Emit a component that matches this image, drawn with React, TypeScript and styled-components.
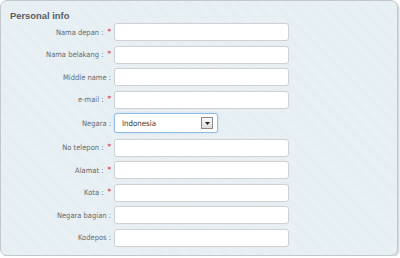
import React from "react";
import styled, { createGlobalStyle } from "styled-components";

const GlobalStyle = createGlobalStyle`
    html, body {
        margin: 0;
        padding: 0;
        background: #ffffff;
    }
    body {
        font-family: "DejaVu Sans Condensed", "Liberation Sans", Arial, sans-serif;
    }
`;

type Field = { label: string; required?: boolean; kind?: "text" | "select"; value?: string };

const fields: Field[] = [
    { label: "Nama depan", required: true },
    { label: "Nama belakang", required: true },
    { label: "Middle name" },
    { label: "e-mail", required: true },
    { label: "Negara", kind: "select", value: "Indonesia" },
    { label: "No telepon", required: true },
    { label: "Alamat", required: true },
    { label: "Kota", required: true },
    { label: "Negara bagian" },
    { label: "Kodepos" },
];

export default function App() {
    return (
        <>
            <GlobalStyle />
            <Panel>
                <Title>Personal info</Title>
                <Form>
                    {fields.map((field) => (
                        <Row key={field.label} tall={field.kind === "select"}>
                            <Label>
                                {field.label} :{field.required && <Star>*</Star>}
                            </Label>
                            {field.kind === "select" ? (
                                <SelectBox>
                                    <SelectText>{field.value}</SelectText>
                                    <DropButton>
                                        <svg width="5" height="3" viewBox="0 0 5 3">
                                            <path d="M0 0h5L2.5 3z" fill="#222" />
                                        </svg>
                                    </DropButton>
                                </SelectBox>
                            ) : (
                                <TextInput />
                            )}
                        </Row>
                    ))}
                </Form>
            </Panel>
        </>
    );
}

const Panel = styled.div`
    box-sizing: border-box;
    width: 398px;
    height: 256px;
    border: 1px solid #c4c8cb;
    border-radius: 7px;
    background-color: #e4edf2;
    background-image: repeating-linear-gradient(45deg, rgba(255, 255, 255, 0.25) 0 1px, transparent 1px 2px);
    box-shadow: 1px 1px 0 #d6d9db, 2px 2px 0 #eceeef;
    padding: 9px 0 0 0;
`;

const Title = styled.div`
    font-family: "Liberation Sans", Arial, sans-serif;
    font-size: 9.4px;
    font-weight: bold;
    color: #585c60;
    padding-left: 9px;
    line-height: 12px;
`;

const Form = styled.div`
    display: flex;
    flex-direction: column;
    gap: 4.5px;
    margin-top: 1px;
`;

const Row = styled.div<{ tall: boolean }>`
    display: flex;
    align-items: center;
    height: ${(p) => (p.tall ? 20 : 18)}px;
    margin: ${(p) => (p.tall ? "0 0 1px" : "0")};
`;

const Label = styled.div`
    box-sizing: border-box;
    width: 113px;
    padding-right: 3px;
    text-align: right;
    font-size: 7.5px;
    color: #666a6d;
    white-space: nowrap;
`;

const Star = styled.span`
    color: #e8474c;
    font-weight: bold;
    font-size: 7.5px;
    margin-left: 4px;
    position: relative;
    top: -1px;
`;

const TextInput = styled.div`
    box-sizing: border-box;
    width: 175px;
    height: 18px;
    background: #ffffff;
    border: 1px solid #cfd2d4;
    border-radius: 3px;
    box-shadow: 0 0 0 1px #e9edf0;
`;

const SelectBox = styled.div`
    box-sizing: border-box;
    width: 104px;
    height: 20px;
    display: flex;
    align-items: center;
    justify-content: space-between;
    background: #ffffff;
    border: 1px solid #8fbde6;
    border-radius: 3px;
    box-shadow: 0 0 2px #b8d6ef;
    padding: 0 4px 0 7px;
`;

const SelectText = styled.span`
    font-size: 7.8px;
    color: #333;
`;

const DropButton = styled.span`
    box-sizing: border-box;
    width: 12px;
    height: 12px;
    display: flex;
    align-items: center;
    justify-content: center;
    border: 1px solid #8a8a8a;
    background: linear-gradient(#fafafa, #dcdcdc);
`;
